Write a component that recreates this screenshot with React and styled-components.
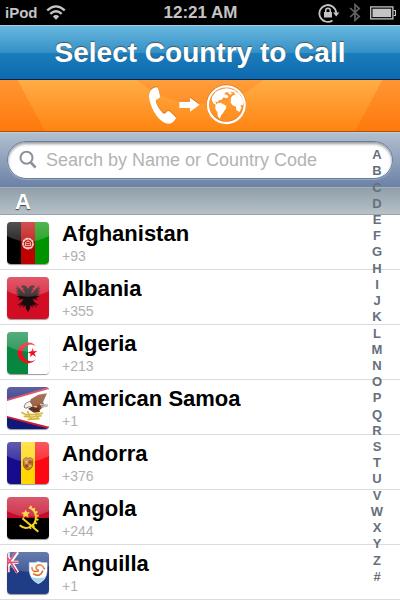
import React from "react";
import styled, { createGlobalStyle } from "styled-components";

const GlobalStyle = createGlobalStyle`
  *, *::before, *::after { box-sizing: border-box; }
  body {
    margin: 0;
    background: #fff;
    font-family: "Liberation Sans", Arial, Helvetica, sans-serif;
    overflow-x: hidden;
  }
`;

const Screen = styled.div`
  display: flex;
  flex-direction: column;
`;

const StatusBar = styled.div`
  display: grid;
  grid-template-columns: 1fr auto 1fr;
  align-items: center;
  height: 25px;
  padding: 0 4px 0 5px;
  background: #000;
  color: #c4c4c4;
`;

const Carrier = styled.div`
  display: flex;
  align-items: center;
  gap: 8px;
  font-size: 15px;
  font-weight: bold;
  line-height: 24px;
`;

const Clock = styled.time`
  font-size: 17px;
  font-weight: bold;
  line-height: 24px;
`;

const StatusIcons = styled.div`
  display: flex;
  align-items: center;
  justify-content: flex-end;
  gap: 9px;
`;

const TitleBar = styled.header`
  height: 55px;
  border-top: 1px solid #a5cfe3;
  border-bottom: 1px solid #07264f;
  background: linear-gradient(#69b7de 0%, #3491c6 50%, #1b7dbc 51%, #0d69ae 100%);
`;

const Title = styled.h1`
  margin: 0;
  color: #fff;
  font-size: 28px;
  line-height: 53px;
  text-align: center;
  white-space: nowrap;
  text-shadow: 0 -1px 1px rgba(70, 60, 50, 0.7);
`;

const Banner = styled.div`
  display: flex;
  align-items: flex-start;
  justify-content: center;
  height: 52px;
  padding-top: 4px;
  border-bottom: 1px solid #a1540f;
  background:
    conic-gradient(from -28deg at 50% 343px, transparent 0 56deg, rgba(255, 90, 0, 0.28) 56deg),
    radial-gradient(circle at 50% -74px, rgba(255, 110, 20, 0.24) 97px, transparent 98px),
    linear-gradient(#ffad47, #ff8411);
`;

const Directory = styled.main`
  position: relative;
`;

const SearchForm = styled.form`
  height: 55px;
  padding: 8px 7px 9px;
  border-top: 1px solid #c4cbd4;
  background: linear-gradient(#b1bfcf, #6c82a5);
`;

const SearchField = styled.label`
  display: flex;
  align-items: center;
  gap: 9px;
  height: 38px;
  padding: 0 40px 0 11px;
  border: 1px solid #65809f;
  border-radius: 19px;
  background: #fff;
  box-shadow: inset 0 2px 3px rgba(0, 0, 0, 0.4), 0 1px 0 rgba(255, 255, 255, 0.25);
`;

const SearchInput = styled.input`
  flex: 1;
  min-width: 0;
  padding: 0;
  border: 0;
  outline: 0;
  background: transparent;
  color: #222;
  font-family: inherit;
  font-size: 18px;
  line-height: 24px;
  &::placeholder { color: #b3b3b3; opacity: 1; }
`;

const SectionHeader = styled.h2`
  height: 28px;
  margin: 0;
  padding-left: 15px;
  border-top: 1px solid #a5b1ba;
  border-bottom: 1px solid #98a4ae;
  background: linear-gradient(#909faa, #b7c1c8);
  color: #fff;
  font-size: 22px;
  line-height: 28px;
  text-shadow: 0 1px 1px rgba(0, 0, 0, 0.65);
`;

const CountryList = styled.ul`
  margin: 0;
  padding: 0;
  list-style: none;
`;

const CountryRow = styled.li`
  border-bottom: 1px solid #dcdcdc;
`;

const CountryButton = styled.button`
  display: flex;
  gap: 13px;
  width: 100%;
  height: 54px;
  padding: 7px 7px 0;
  border: 0;
  background: #fff;
  font-family: inherit;
  text-align: left;
`;

const Flag = styled.svg`
  flex: none;
  width: 42px;
  height: 42px;
  border-radius: 4px;
  box-shadow: 0 1px 1px rgba(0, 0, 0, 0.4);
`;

const CountryText = styled.span`
  display: flex;
  flex-direction: column;
`;

const CountryName = styled.span`
  color: #000;
  font-size: 22px;
  font-weight: bold;
  line-height: 24px;
`;

const DialCode = styled.span`
  color: #b0b0b0;
  font-size: 14px;
  line-height: 20px;
`;

const LetterIndex = styled.nav`
  position: absolute;
  top: 15px;
  right: 12px;
  bottom: 15px;
  display: flex;
  flex-direction: column;
  width: 22px;
`;

const LetterLink = styled.a`
  flex: 1;
  display: flex;
  align-items: center;
  justify-content: center;
  min-height: 0;
  color: #66707c;
  font-size: 13px;
  font-weight: bold;
  line-height: 16px;
  text-decoration: none;
`;

const WifiIcon = () => (
  <svg width="20" height="15" viewBox="0 0 20 15" fill="none" stroke="#c4c4c4" strokeWidth="2.3" aria-hidden="true">
    <path d="M1.2 5.4Q10-2.6 18.8 5.4M4.3 8.8Q10 3.8 15.7 8.8" />
    <path d="M6.8 11.4Q10 8.6 13.2 11.4L10 14.8Z" fill="#c4c4c4" stroke="none" />
  </svg>
);

const RotationLockIcon = () => (
  <svg width="22" height="20" viewBox="0 0 22 20" fill="none" stroke="#c4c4c4" aria-hidden="true">
    <path d="M14.5 17.4A8.4 8.4 0 1 1 18.2 10" strokeWidth="1.8" />
    <path d="M15 9.5h6.4L18.2 13.5Z" fill="#c4c4c4" stroke="none" />
    <rect x="6" y="9" width="8" height="5.5" fill="#c4c4c4" stroke="none" />
    <path d="M7.7 9V7.6a2.3 2.3 0 0 1 4.6 0V9" strokeWidth="1.5" />
  </svg>
);

const BluetoothIcon = () => (
  <svg width="12" height="19" viewBox="0 0 12 19" fill="none" stroke="#626262" strokeWidth="1.7" aria-hidden="true">
    <path d="M1.2 5L10.2 13.5L6 17.3V1.7L10.2 5.5L1.2 14" />
  </svg>
);

const BatteryIcon = () => (
  <svg width="26" height="14" viewBox="0 0 26 14" aria-hidden="true">
    <rect x="0.7" y="0.9" width="22.2" height="12" fill="none" stroke="#c4c4c4" strokeWidth="1.3" />
    <rect x="2.5" y="2.7" width="18.6" height="8.4" fill="#c4c4c4" />
    <path d="M23.5 4.5h2v5h-2" fill="none" stroke="#c4c4c4" strokeWidth="1.2" />
  </svg>
);

const CallAbroadIcon = () => (
  <svg width="106" height="42" viewBox="21 18 318 126" role="img" aria-label="Call abroad">
    <g fill="#b85a08" opacity="0.5" transform="translate(0 -3)">
      <path d="M30 40Q38 28 52 28Q55 29 60 54L59 59Q52 62 47 67Q48 83 68 105Q74 108 77 105L83 99Q87 98 92 103L107 118Q110 121 104 127L96 134Q84 141 68 131Q48 117 36 89Q24 61 28 46Z" />
      <path d="M118 71h32V59l29 21-29 21V90h-32Z" />
    </g>
    <g fill="#fff">
      <path d="M30 40Q38 28 52 28Q55 29 60 54L59 59Q52 62 47 67Q48 83 68 105Q74 108 77 105L83 99Q87 98 92 103L107 118Q110 121 104 127L96 134Q84 141 68 131Q48 117 36 89Q24 61 28 46Z" />
      <path d="M118 71h32V59l29 21-29 21V90h-32Z" />
    </g>
    <circle cx="259" cy="79" r="55" fill="none" stroke="#b85a08" strokeOpacity="0.55" strokeWidth="9" />
    <circle cx="259" cy="80" r="55" fill="none" stroke="#fff" strokeWidth="7" />
    <g fill="#fff">
      <path d="M216 57L226 43L236 37L249 33L259 31L273 33L280 38L271 42L278 47L269 50L264 43L257 43L253 49L262 51L266 58L258 61L251 58L244 66L237 67L233 73L226 70L230 80L238 80L231 83L220 76L215 66Z" />
      <path d="M226 83L233 76L241 74L249 78L258 83L259 90L254 97L249 106L243 112L240 122L234 116L232 103L226 93Z" />
      <path d="M273 59L277 53L287 49L281 44L284 39L297 46L307 61L310 72L309 82L302 80L304 91L298 102L289 96L288 86L278 82L272 74Z" />
      <path d="M271 33L289 38L278 43L270 38Z" />
    </g>
  </svg>
);

const SearchIcon = () => (
  <svg width="18" height="20" viewBox="0 0 18 20" fill="none" stroke="#8b929b" aria-hidden="true">
    <circle cx="7.5" cy="7.8" r="6" strokeWidth="2.1" />
    <path d="M11.8 12.4L16.6 17.6" strokeWidth="2.7" />
  </svg>
);

const flagArt = {
  Afghanistan: (
    <>
      <path fill="#000" d="M0 0h42v126H0Z" />
      <path fill="#be0000" d="M42 0h42v126H42Z" />
      <path fill="#009300" d="M84 0h42v126H84Z" />
      <g fill="none" stroke="#f5d8cf">
        <circle cx="63" cy="65" r="15" strokeWidth="5" strokeDasharray="9 1" />
        <path d="M55 71V63Q63 52 71 63V71ZM50 77H76M58 65h10" strokeWidth="3" />
      </g>
    </>
  ),
  Albania: (
    <>
      <path fill="#d20c25" d="M0 0h126v126H0Z" />
      <g fill="#170c0c" stroke="#170c0c" strokeWidth="1">
        <path d="M63 37L57 28L48 25L42 30L51 33L47 38L53 42L53 51L29 26L34 36L27 33L36 43L27 41L37 50L28 50L38 57L29 59L41 63L34 68L50 65L45 75L32 84L45 81L38 90L50 82L49 91L56 83L57 94L63 104L69 94L70 83L77 91L76 82L88 90L81 81L94 84L81 75L76 65L92 68L85 63L97 59L88 57L98 50L89 50L99 41L90 43L99 33L92 36L97 26L73 51L73 42L79 38L75 33L84 30L78 25L69 28Z" />
      </g>
    </>
  ),
  Algeria: (
    <>
      <path fill="#fff" d="M0 0h126v126H0Z" />
      <path fill="#06863e" d="M0 0h63v126H0Z" />
      <path fill="#f00d20" d="M87 43A31 31 0 1 0 87 82A25 25 0 1 1 87 43Z" />
      <path fill="#f00d20" d="M77 48L80 58L91 57L82 64L87 74L77 68L69 76L71 65L62 61L73 58Z" />
    </>
  ),
  "American Samoa": (
    <>
      <path fill="#101878" d="M0 0h126v126H0Z" />
      <path fill="#cf1834" d="M126 0L0 36V92L126 126Z" />
      <path fill="#fff" d="M126 6L0 42V87L126 119Z" />
      <path fill="#87401f" d="M120 19L94 23L72 36L66 49L77 59L88 57L95 72L105 63L115 56L108 46Z" />
      <path fill="#f2eee8" stroke="#4d2b19" strokeWidth="2" d="M68 43L55 50L51 60L57 64L66 59L79 62L75 51Z" />
      <path fill="#623119" d="M63 65L75 59L95 62L99 75L81 77Z" />
      <path d="M43 76L57 83L87 83L108 78M50 88L78 90L104 86M62 97L98 95M61 72L73 98M87 76L94 98" fill="none" stroke="#d6b737" strokeWidth="5" />
      <path d="M99 53L123 54M103 60L122 57" stroke="#bfc2bc" strokeWidth="5" />
    </>
  ),
  Andorra: (
    <>
      <path fill="#170b8d" d="M0 0h42v126H0Z" />
      <path fill="#ffd600" d="M42 0h42v126H42Z" />
      <path fill="#fb0812" d="M84 0h42v126H84Z" />
      <path d="M49 52Q57 43 63 49Q70 43 78 52L76 72Q73 82 63 84Q52 81 50 72Z" fill="#bd812f" stroke="#9b5b25" strokeWidth="3" />
      <path d="M54 56h8v9h-8ZM66 69h7v7h-7Z" fill="#e2b550" />
      <path d="M65 55h9v9h-9ZM54 68h9v8h-9Z" fill="#ac3e2d" />
    </>
  ),
  Angola: (
    <>
      <path fill="#c70a28" d="M0 0h126v63H0Z" />
      <path fill="#000" d="M0 63h126v63H0Z" />
      <path d="M66 31A32 32 0 0 1 66 91Q52 97 38 85" fill="none" stroke="#f6d51c" strokeWidth="6" />
      <path d="M69 30A33 33 0 0 1 66 93" fill="none" stroke="#f6d51c" strokeWidth="9" strokeDasharray="5 6" />
      <path d="M46 64L64 79L94 104" fill="none" stroke="#f6d51c" strokeWidth="6" />
      <path fill="#f6d51c" d="M56 38L60 46L69 46L62 53L65 62L56 57L48 63L50 53L43 47L52 46Z" />
    </>
  ),
  Anguilla: (
    <>
      <path fill="#1f3d86" d="M0 0h126v126H0Z" />
      <path d="M0 11L32 62M32 0L0 44M0 31H34M3 0V61" stroke="#fff" strokeWidth="10" fill="none" />
      <path d="M0 31H34M1 0V61M0 14L30 62M28 0L0 39" stroke="#d91945" strokeWidth="5" fill="none" />
      <path fill="#fff" stroke="#edf2f4" strokeWidth="2" d="M67 32Q80 34 94 29Q107 34 120 32V57Q119 84 94 95Q70 84 67 57Z" />
      <path fill="#a3daee" d="M72 76Q93 81 115 76Q108 88 94 94Q79 88 72 76Z" />
      <path d="M75 47Q75 62 94 57M80 66Q100 77 107 57M112 50Q103 32 89 42Q83 49 94 55" fill="none" stroke="#e46b24" strokeWidth="5" strokeLinecap="round" />
    </>
  ),
};

const countries = [
  { name: "Afghanistan", code: "+93" },
  { name: "Albania", code: "+355" },
  { name: "Algeria", code: "+213" },
  { name: "American Samoa", code: "+1" },
  { name: "Andorra", code: "+376" },
  { name: "Angola", code: "+244" },
  { name: "Anguilla", code: "+1" },
];

const letters = [..."ABCDEFGHIJKLMNOPQRSTUVWXYZ#"];

function CountryFlag({ name }) {
  const id = `gloss-${name.replace(" ", "-")}`;
  return (
    <Flag viewBox="0 0 126 126" aria-hidden="true">
      <defs>
        <linearGradient id={id} x2="0" y2="1">
          <stop stopColor="#fff" stopOpacity="0.32" />
          <stop offset="1" stopColor="#fff" stopOpacity="0.17" />
        </linearGradient>
      </defs>
      {flagArt[name]}
      <path d="M0 0H126V42Q63 76 0 42Z" fill={`url(#${id})`} />
    </Flag>
  );
}

export default function App() {
  return (
    <Screen>
      <GlobalStyle />
      <StatusBar>
        <Carrier>iPod<WifiIcon /></Carrier>
        <Clock>12:21 AM</Clock>
        <StatusIcons>
          <RotationLockIcon />
          <BluetoothIcon />
          <BatteryIcon />
        </StatusIcons>
      </StatusBar>
      <TitleBar>
        <Title>Select Country to Call</Title>
      </TitleBar>
      <Banner>
        <CallAbroadIcon />
      </Banner>
      <Directory>
        <SearchForm role="search" onSubmit={(event) => event.preventDefault()}>
          <SearchField>
            <SearchIcon />
            <SearchInput
              type="text"
              aria-label="Search by Name or Country Code"
              placeholder="Search by Name or Country Code"
            />
          </SearchField>
        </SearchForm>
        <SectionHeader id="A">A</SectionHeader>
        <CountryList>
          {countries.map(({ name, code }) => (
            <CountryRow key={name}>
              <CountryButton type="button">
                <CountryFlag name={name} />
                <CountryText>
                  <CountryName>{name}</CountryName>
                  <DialCode>{code}</DialCode>
                </CountryText>
              </CountryButton>
            </CountryRow>
          ))}
        </CountryList>
        <LetterIndex aria-label="Jump to letter">
          {letters.map((letter) => (
            <LetterLink key={letter} href={`#${letter}`}>{letter}</LetterLink>
          ))}
        </LetterIndex>
      </Directory>
    </Screen>
  );
}
